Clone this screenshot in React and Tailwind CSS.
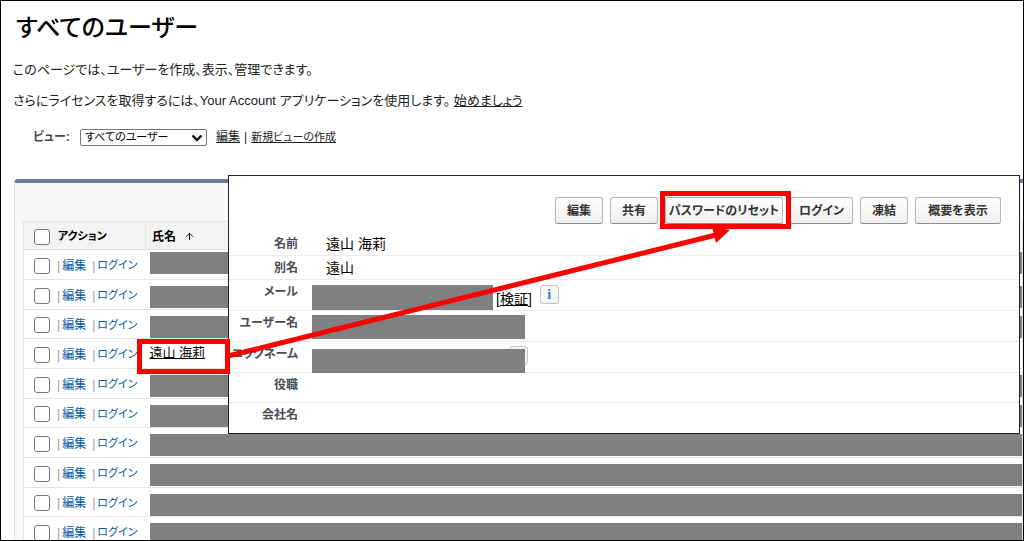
import { ArrowUp } from 'lucide-react';

const rows = [
  { id: 1, bar: 'mt-[2px]' },
  { id: 2, bar: 'mt-[6px]' },
  { id: 3, bar: 'mt-[6px]' },
  { id: 4, name: '遠山 海莉' },
  { id: 5, bar: 'mt-[6px]' },
  { id: 6, bar: 'mt-[6px]' },
  { id: 7, bar: 'mt-[6px]' },
  { id: 8, bar: 'mt-[6px]' },
  { id: 9, bar: 'mt-[6px]' },
  { id: 10, bar: 'mt-[6px]' },
];

const checkboxClass =
  'block size-4 shrink-0 appearance-none rounded-[3px] border border-[#767676] bg-white';

function ActionButton({ className, children }) {
  return (
    <button
      type="button"
      className={`h-[27px] shrink-0 whitespace-nowrap rounded-[3px] border border-[#b5b5b5] border-b-[#8f8f8f] bg-gradient-to-b from-white to-[#eeeeee] text-center text-xs leading-5 font-bold text-[#333333] ${className}`}
    >
      {children}
    </button>
  );
}

function DetailRow({ label, className, children }) {
  return (
    <div className={`flex border-b border-[#ececec] last:border-b-0 ${className}`}>
      <dt className="w-[69px] shrink-0 whitespace-nowrap pt-[2px] text-right text-xs leading-5 font-bold text-[#4a4a56]">
        {label}
      </dt>
      <dd className="flex flex-1 items-start pl-[14px] text-sm leading-5">{children}</dd>
    </div>
  );
}

function UserDetail() {
  return (
    <section className="absolute top-[174px] right-[3px] left-[227px] isolate border border-[#222222] bg-white text-black">
      <div className="flex gap-[7px] pt-[21px] pl-[326px]">
        <ActionButton className="w-12">編集</ActionButton>
        <ActionButton className="w-12">共有</ActionButton>
        <ActionButton className="w-[118px]">パスワードのリセット</ActionButton>
        <ActionButton className="w-[63px]">ログイン</ActionButton>
        <ActionButton className="w-12">凍結</ActionButton>
        <ActionButton className="w-[86px]">概要を表示</ActionButton>
      </div>

      <dl className="mt-2">
        <DetailRow label="名前" className="h-6">
          <span className="pt-[2px] pl-[14px]">遠山 海莉</span>
        </DetailRow>
        <DetailRow label="別名" className="h-6">
          <span className="pt-[2px] pl-[14px]">遠山</span>
        </DetailRow>
        <DetailRow label="メール" className="h-[31px]">
          <span className="mt-[5px] h-[25px] w-[181px] bg-[#808080]" />
          <a href="#verify" className="mt-[9px] ml-[3px] text-sm leading-5 underline">[検証]</a>
          <button
            type="button"
            aria-label="情報"
            className="mt-[5px] ml-2 size-[19px] rounded-[3px] border border-[#c4c4c4] bg-[#f4f4f4] font-['Liberation_Serif',serif] text-sm leading-4 font-bold text-[#2a84d8]"
          >
            i
          </button>
        </DetailRow>
        <DetailRow label="ユーザー名" className="h-[31px]">
          <span className="mt-1 h-6 w-[213px] bg-[#808080]" />
        </DetailRow>
        <DetailRow label="ニックネーム" className="h-[31px]">
          <span className="relative mt-[7px] h-6 w-[213px] bg-[#808080]">
            <span className="absolute -top-[3px] -right-[3px] -z-10 size-[19px] rounded-[3px] border border-[#c4c4c4] bg-[#f4f4f4]" />
          </span>
        </DetailRow>
        <DetailRow label="役職" className="h-[30px]" />
        <DetailRow label="会社名" className="h-[30px]" />
      </dl>
    </section>
  );
}

function UserTable() {
  return (
    <table className="w-full table-fixed border-collapse border border-[#e0e3e5] bg-white text-xs">
      <colgroup>
        <col className="w-[122px]" />
        <col />
      </colgroup>
      <thead>
        <tr className="h-7 bg-[#f2f3f3] text-left text-black">
          <th className="border border-[#e0e3e5] p-0">
            <div className="flex items-center gap-2 pt-[2px] pl-[10px] text-[11px]">
              <input type="checkbox" aria-label="すべて選択" className={checkboxClass} />
              アクション
            </div>
          </th>
          <th className="border border-[#e0e3e5] p-0">
            <div className="flex items-center gap-2 pt-[2px] pl-[6px]">
              氏名
              <ArrowUp size={11} strokeWidth={2} />
            </div>
          </th>
        </tr>
      </thead>
      <tbody>
        {rows.map((row) => (
          <tr key={row.id} className="h-[30px] border-b border-[#e3e6e8] nth-[3n]:h-[29px]">
            <td className="p-0">
              <div className="flex items-center pt-[2px] pl-[10px] whitespace-nowrap">
                <input type="checkbox" aria-label={`ユーザー ${row.id} を選択`} className={checkboxClass} />
                <span className="ml-[7px] text-[#999999]">|</span>
                <a href="#edit" className="ml-[2px] text-[#015ba7]">編集</a>
                <span className="ml-[6px] text-[#999999]">|</span>
                <a href="#login" className="ml-[2px] text-[11px] text-[#015ba7]">ログイン</a>
              </div>
            </td>
            <td className="p-0 pl-1 align-top">
              {row.name ? (
                <a href="#user" className="block pt-1 text-[13px] leading-5 text-black underline">{row.name}</a>
              ) : (
                <div className={`h-[22px] bg-[#808080] ${row.bar}`} />
              )}
            </td>
          </tr>
        ))}
      </tbody>
    </table>
  );
}

export default function App() {
  return (
    <div className="relative h-screen overflow-hidden border border-black bg-white font-['Liberation_Sans','Noto_Sans_CJK_JP',sans-serif] text-[13px] text-[#222222] [font-feature-settings:'palt']">
      <header className="pt-[11px] pl-3">
        <h1 className="pl-[3px] text-2xl leading-8 font-medium text-black">すべてのユーザー</h1>
        <p className="mt-4 leading-5">このページでは、ユーザーを作成、表示、管理できます。</p>
        <p className="mt-[11px] leading-5">
          さらにライセンスを取得するには、Your Account アプリケーションを使用します。{' '}
          <a href="#start" className="underline">始めましょう</a>
        </p>
        <div className="mt-4 flex items-center pl-5 text-xs leading-5">
          <label htmlFor="view" className="w-[47px] font-bold text-[#4a4a56]">ビュー:</label>
          <div className="relative">
            <select
              id="view"
              className="block h-[17px] w-[127px] appearance-none rounded-[2px] border border-[#767676] bg-white pl-1 text-[11px] leading-[15px] text-black"
            >
              <option>すべてのユーザー</option>
            </select>
            <svg viewBox="0 0 12 8" className="pointer-events-none absolute top-[5px] right-1 h-2 w-3">
              <path d="M1.5 1.5 6 6l4.5-4.5" fill="none" stroke="#111" strokeWidth="2.4" />
            </svg>
          </div>
          <a href="#edit-view" className="ml-[9px] underline">編集</a>
          <span className="mx-1">|</span>
          <a href="#new-view" className="text-[11px] underline">新規ビューの作成</a>
        </div>
      </header>

      <main className="mt-8 ml-[13px] rounded-tl-[4px] border-t-4 border-l border-t-[#6e7c9c] border-l-[#dfe4e8] bg-[#f8f8f8] pt-[38px] pl-2">
        <UserTable />
      </main>

      <UserDetail />

      {/* red call-outs: user name -> password reset button */}
      <div className="pointer-events-none absolute top-[338px] left-[136px] h-[35px] w-[93px] border-5 border-[#ff0000]" />
      <div className="pointer-events-none absolute top-[190px] left-[659px] h-[38px] w-[131px] border-5 border-[#ff0000]" />
      <svg
        viewBox="0 0 510 140"
        className="pointer-events-none absolute top-[224px] left-[224px] h-[140px] w-[510px]"
      >
        <path d="M3 131 491 10" stroke="#ff0000" strokeWidth="5" />
        <path d="M487 2 505 5 491 18Z" fill="#ff0000" />
      </svg>
    </div>
  );
}
